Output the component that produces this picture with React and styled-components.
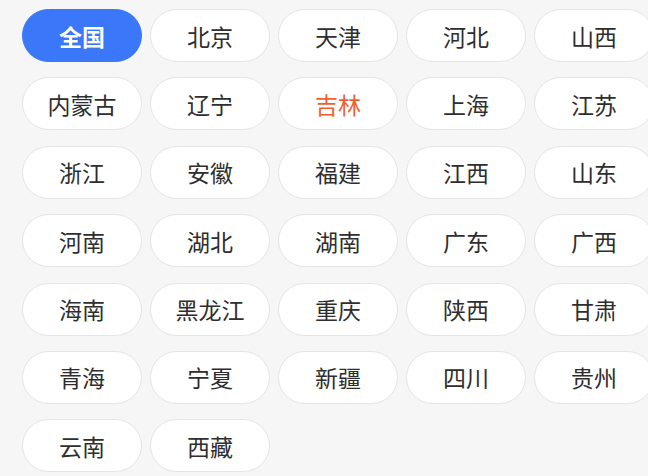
import React from 'react';
import styled, { createGlobalStyle } from 'styled-components';

const GlobalStyle = createGlobalStyle`
    html, body {
        margin: 0;
        padding: 0;
        background: #f6f6f6;
        overflow: hidden;
    }
`;

const Page = styled.div`
    width: 648px;
    height: 476px;
    overflow: hidden;
    background: #f6f6f6;
    font-family: "Noto Sans CJK SC", "Noto Sans", sans-serif;
`;

const Grid = styled.div`
    display: grid;
    grid-template-columns: repeat(5, 120px);
    column-gap: 8px;
    row-gap: 15.4px;
    padding: 9px 0 0 22px;
    width: max-content;
`;

const Pill = styled.div`
    box-sizing: border-box;
    height: 53px;
    border-radius: 27px;
    display: flex;
    align-items: center;
    justify-content: center;
    font-size: 23px;
    border: 1px solid ${p => (p.$active ? '#3a78f9' : '#e4e4e4')};
    background: ${p => (p.$active ? '#3a78f9' : '#ffffff')};
    color: ${p => (p.$active ? '#ffffff' : p.$hot ? '#f0602f' : '#2e2e2e')};
    font-weight: ${p => (p.$active ? 700 : 400)};
`;

const provinces = [
    '全国', '北京', '天津', '河北', '山西',
    '内蒙古', '辽宁', '吉林', '上海', '江苏',
    '浙江', '安徽', '福建', '江西', '山东',
    '河南', '湖北', '湖南', '广东', '广西',
    '海南', '黑龙江', '重庆', '陕西', '甘肃',
    '青海', '宁夏', '新疆', '四川', '贵州',
    '云南', '西藏',
];

export default function App() {
    return (
        <Page>
            <GlobalStyle />
            <Grid>
                {provinces.map(name => (
                    <Pill key={name} $active={name === '全国'} $hot={name === '吉林'}>
                        {name}
                    </Pill>
                ))}
            </Grid>
        </Page>
    );
}
